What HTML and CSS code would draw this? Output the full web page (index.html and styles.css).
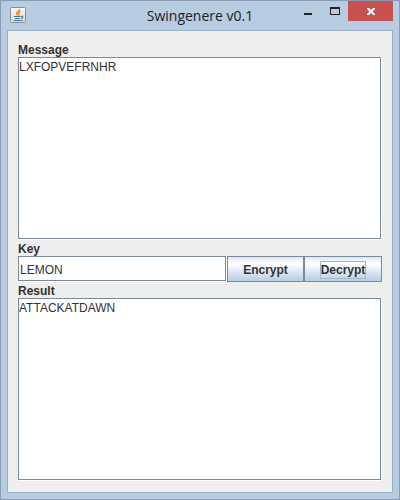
FILE: index.html
```html
<!DOCTYPE html>
<html lang="en">
<head>
<meta charset="utf-8">
<title>Swingenere v0.1</title>
<link rel="stylesheet" href="styles.css">
</head>
<body>
<div class="window">
  <header class="titlebar">
    <svg class="app-icon" width="16" height="16" viewBox="0 0 16 16" aria-hidden="true">
      <defs>
        <linearGradient id="tile" x1="0" y1="0" x2="0" y2="1">
          <stop offset="0" stop-color="#f8f8f8"/>
          <stop offset="1" stop-color="#d3d7da"/>
        </linearGradient>
      </defs>
      <rect x=".5" y=".5" width="15" height="15" rx="1" fill="url(#tile)" stroke="#8b9298"/>
      <path d="M9.500 2C10 4 6 4.600 6.600 6.500C6.800 7.200 7.600 7.600 7.500 8.500M10.500 4.500C8.500 5.300 8.200 6 8.800 6.800C9.200 7.400 8.900 8 8.500 8.500" fill="none" stroke="#ee8525" stroke-width="1.400"/>
      <path d="M4 9.500H10.500M5 11.500H9.800M11 9.300C13.500 8.800 13 11 11 11.500M3.500 13.500H12.500" fill="none" stroke="#44789f" stroke-width="1.200"/>
    </svg>
    <h1 class="title">Swingenere v0.1</h1>
    <div class="controls">
      <button class="control minimize" type="button" aria-label="Minimize">
        <svg width="10" height="8" viewBox="0 0 10 8"><path d="M1 6h8v2H1z" fill="#222"/></svg>
      </button>
      <button class="control maximize" type="button" aria-label="Maximize">
        <svg width="10" height="8" viewBox="0 0 10 8"><path d="M0 0h10v8H0zM1 2v5h8V2z" fill="#222" fill-rule="evenodd"/></svg>
      </button>
      <button class="control close" type="button" aria-label="Close">
        <svg width="8" height="7" viewBox="0 0 8 7"><path d="M0 0h2l2 2 2-2h2v1L5.500 3.500 8 6v1H6L4 5 2 7H0V6l2.500-2.500L0 1z" fill="#fff"/></svg>
      </button>
    </div>
  </header>
  <main class="client">
    <label class="label" for="message">Message</label>
    <div class="well area"><textarea class="input" id="message" spellcheck="false">LXFOPVEFRNHR</textarea></div>
    <label class="label" for="key">Key</label>
    <div class="row">
      <div class="well field"><input class="input" id="key" type="text" value="LEMON" spellcheck="false"></div>
      <div class="buttons">
        <button class="button" type="button"><span class="caption">Encrypt</span></button>
        <button class="button" type="button"><span class="caption focused">Decrypt</span></button>
      </div>
    </div>
    <label class="label" for="result">Result</label>
    <div class="well area"><textarea class="input" id="result" spellcheck="false">ATTACKATDAWN</textarea></div>
  </main>
</div>
</body>
</html>
```
FILE: styles.css
```css
* {
  box-sizing: border-box;
}

body {
  margin: 0;
  font: 12px/16px "Liberation Sans", Arial, sans-serif;
  color: #333;
}

button,
input,
textarea {
  font: inherit;
  color: inherit;
  border: 0;
  border-radius: 0;
  margin: 0;
  padding: 0;
  outline: 0;
}

.window {
  min-height: 100vh;
  display: flex;
  flex-direction: column;
  padding: 0 6px 6px;
  background: #b7cbe1;
  border: 1px solid #8a9cb4;
}

.titlebar {
  display: grid;
  grid-template-columns: 1fr auto 1fr;
  height: 29px;
}

.app-icon {
  margin: 6px 0 0 3px;
}

.title {
  margin: 0;
  font: 14px/30px "Open Sans", "Segoe UI", sans-serif;
  color: #222;
}

.controls {
  display: flex;
  justify-content: flex-end;
  align-items: flex-start;
}

.control {
  display: flex;
  justify-content: center;
  align-items: center;
  width: 27px;
  height: 20px;
  background: none;
}

.close {
  width: 45px;
  background: #c75050;
}

.client {
  flex: 1;
  display: flex;
  flex-direction: column;
  padding: 10px 10px 11px;
  background: #eee;
  border: 1px solid #9aafca;
}

.label {
  height: 16px;
  font-weight: bold;
  line-height: 18px;
}

.well {
  display: flex;
  border: solid #fff;
  border-width: 0 1px 1px 0;
}

.area {
  flex: 1;
}

.input {
  flex: 1;
  min-width: 0;
  border: 1px solid #7a8a99;
  background: #fff;
  resize: none;
}

.area .input {
  padding-top: 1px;
}

.row {
  display: flex;
  height: 26px;
}

.field {
  flex: 1;
}

.field .input {
  padding: 2px 0 0 1px;
}

.buttons {
  display: flex;
}

.button {
  width: 78px;
  padding-top: 1px;
  border: 1px solid #7a8a99;
  background: linear-gradient(#dde8f3, #fff 30%, #dde8f3 60%, #b8cfe5);
  font-weight: bold;
}

.button:first-child {
  width: 77px;
}

.caption {
  display: inline-block;
  border: 1px solid transparent;
}

.focused {
  border-color: #a3b8cc;
}
```
